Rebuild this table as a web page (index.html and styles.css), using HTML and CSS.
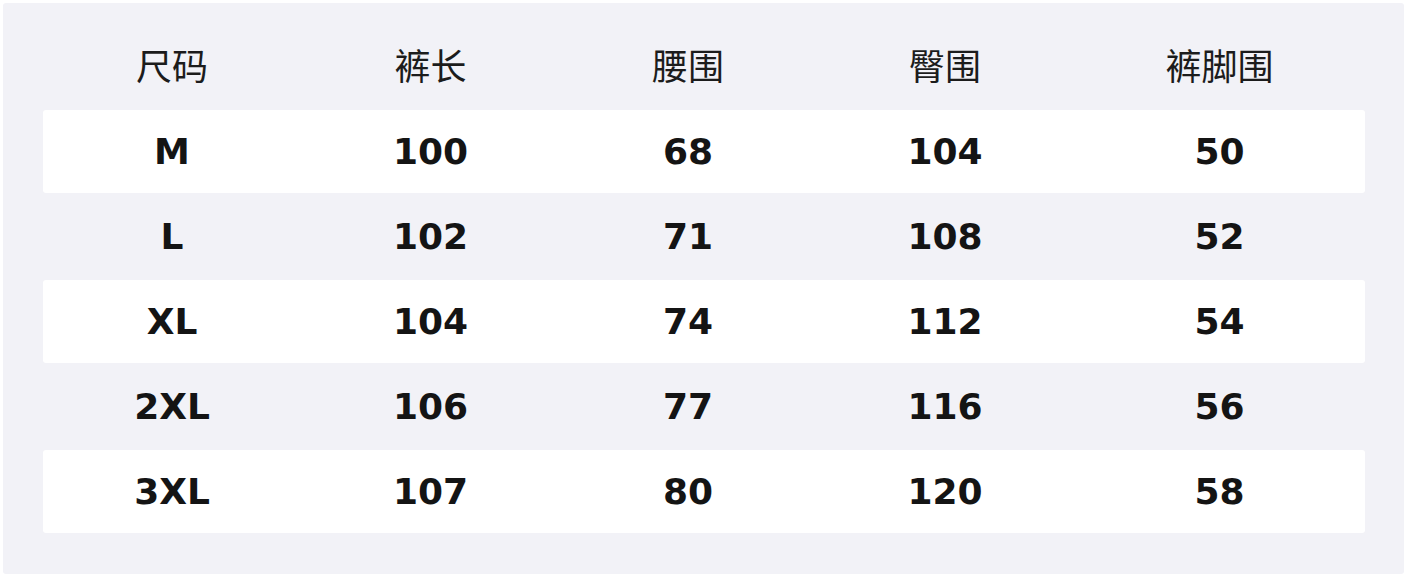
FILE: index.html
```html
<!DOCTYPE html>
<html lang="zh">
<head>
<meta charset="utf-8">
<link rel="stylesheet" href="styles.css">
</head>
<body>
<div class="panel">
  <div class="row head"><div>尺码</div><div>裤长</div><div>腰围</div><div>臀围</div><div>裤脚围</div></div>
  <div class="row odd"><div>M</div><div>100</div><div>68</div><div>104</div><div>50</div></div>
  <div class="row"><div>L</div><div>102</div><div>71</div><div>108</div><div>52</div></div>
  <div class="row odd"><div>XL</div><div>104</div><div>74</div><div>112</div><div>54</div></div>
  <div class="row"><div>2XL</div><div>106</div><div>77</div><div>116</div><div>56</div></div>
  <div class="row odd"><div>3XL</div><div>107</div><div>80</div><div>120</div><div>58</div></div>
</div>
</body>
</html>
```
FILE: styles.css
```css
html, body {
  margin: 0;
  padding: 0;
  background: #ffffff;
}
.panel {
  box-sizing: border-box;
  margin: 3px 4px 4px 3px;
  width: 1401px;
  height: 571px;
  background: #f2f2f7;
  border-radius: 3px;
  padding: 22px 39px 0 40px;
  display: flex;
  flex-direction: column;
  gap: 2px;
  font-family: "DejaVu Sans", "Noto Sans CJK SC", sans-serif;
}
.row {
  box-sizing: border-box;
  display: grid;
  grid-template-columns: 258px 259px 256px 258px 1fr;
  height: 83px;
  align-items: center;
  border-radius: 3px;
  font-size: 36px;
  font-weight: bold;
  color: #141414;
}
.row > div {
  text-align: center;
}
.row.odd {
  background: #ffffff;
}
.row.head {
  padding-bottom: 6px;
  font-family: "Noto Sans CJK SC", sans-serif;
  font-weight: normal;
  font-size: 36px;
  color: #1c1c1c;
}
```
